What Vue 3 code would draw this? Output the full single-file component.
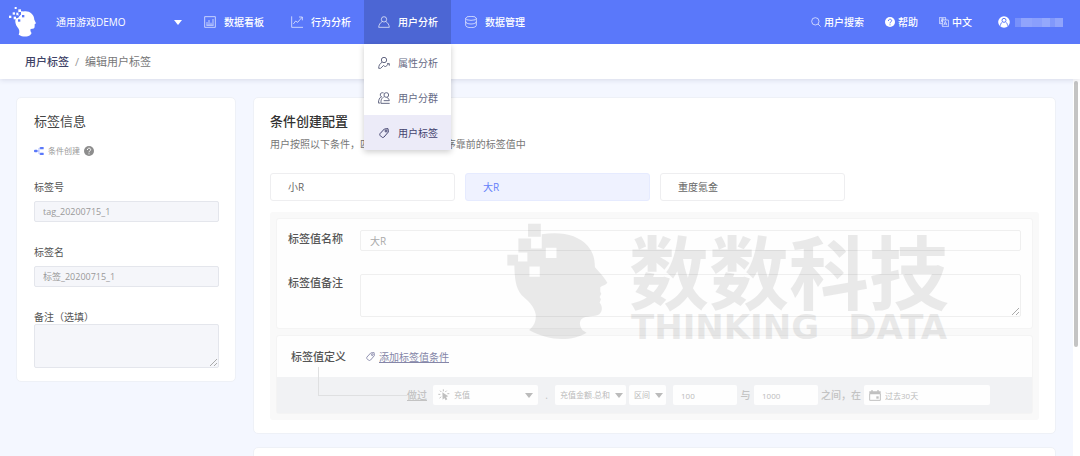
<script setup>
import { ref } from 'vue'

const navItems = [
  { key: 'board', label: '数据看板' },
  { key: 'behavior', label: '行为分析' },
  { key: 'user', label: '用户分析', active: true },
  { key: 'data', label: '数据管理' },
]
const menuItems = [
  { key: 'attr', label: '属性分析' },
  { key: 'group', label: '用户分群' },
  { key: 'tag', label: '用户标签', active: true },
]
const tabs = ['小R', '大R', '重度氪金']
const activeTab = ref(1)
const tagId = ref('tag_20200715_1')
const tagName = ref('标签_20200715_1')
const tagRemark = ref('')
const valueName = ref('大R')
const valueRemark = ref('')
const rangeMin = ref('100')
const rangeMax = ref('1000')
const period = ref('过去30天')
</script>

<template>
  <div class="page">
    <header class="topbar">
      <div class="brand">
        <svg class="logo" viewBox="24 16 88 96" aria-hidden="true">
          <path fill="#fff" d="M69 33C84 29 101 39 102 57L107 68L103 71V77C103 84 99 85 91 85C89 89 91 94 94 97L90 103C80 110 66 109 55 102C59 92 57 87 51 79C46 72 43 63 46 55L55 49Z" />
          <g fill="#fff"><rect x="43" y="19" width="6" height="6" /><rect x="54" y="26" width="8" height="8" /><rect x="37" y="35" width="7" height="7" /><rect x="26" y="45" width="7" height="7" /><rect x="48" y="36" width="8" height="8" /><rect x="40" y="48" width="8" height="8" /><rect x="62" y="32" width="8" height="10" /></g>
          <g fill="#5a78fa"><rect x="54" y="36" width="7" height="6" /><rect x="65" y="43" width="7" height="7" /><rect x="47" y="45" width="7" height="7" /><rect x="53" y="56" width="7" height="7" /></g>
        </svg>
        <button class="project" type="button"><span>通用游戏DEMO</span><i class="caret"></i></button>
      </div>
      <nav class="nav">
        <div v-for="item in navItems" :key="item.key" class="nav-cell">
          <a href="#" class="nav-item" :class="{ active: item.active }">
            <svg class="icon12" viewBox="0 0 36 36" aria-hidden="true">
              <g v-if="item.key === 'board'"><path d="M2 2H34V34H2ZM9 27V18M15 27V12M21 27V20M27 27V9M7 28H29" /></g>
              <g v-else-if="item.key === 'behavior'"><path d="M2 1V34H36M7 24L14 15L20 19L33 4M24 3H34V13" /></g>
              <g v-else-if="item.key === 'user'"><circle cx="18" cy="10" r="8" /><path d="M12 17C6 21 3 26 2 34H34C33 26 30 21 24 17" /></g>
              <g v-else><ellipse cx="18" cy="7" rx="16" ry="6" /><path d="M2 7V28C2 32 9 35 18 35S34 32 34 28V7M2 17C2 21 9 24 18 24S34 21 34 17" /></g>
            </svg>
            <span>{{ item.label }}</span>
          </a>
          <div v-if="item.active" class="menu">
            <a v-for="m in menuItems" :key="m.key" href="#" class="menu-item" :class="{ current: m.active }">
              <svg class="icon12" viewBox="0 0 36 36" aria-hidden="true">
                <g v-if="m.key === 'attr'"><circle cx="18" cy="9" r="8" /><path d="M12 16C5 20 2 26 2 34H8L17 25L22 30L32 20M27 20H34V26" /></g>
                <g v-else-if="m.key === 'group'"><path d="M17 15C8 20 9 28 9 34H35M26 16C31 18 33 22 34 26H17M10 14C4 17 2 24 1 33H7" /><circle cx="25" cy="9" r="7" /><path d="M17 3C11 0 6 4 7 9C7 12 9 14 12 15" /></g>
                <g v-else><path d="M6 20L19 6L30 5L31 15L18 30C16 32 13 32 11 30L6 25C5 23 5 21 6 20Z" /><circle cx="24" cy="12" r="3" /></g>
              </svg>
              <span>{{ m.label }}</span>
            </a>
          </div>
        </div>
      </nav>
      <div class="tools">
        <a href="#" class="tool">
          <svg class="icon10" viewBox="0 0 30 30" aria-hidden="true"><circle cx="13" cy="13" r="11" /><path d="M21 21L29 29" /></svg>用户搜索
        </a>
        <a href="#" class="tool">
          <svg class="icon10" viewBox="0 0 30 30" aria-hidden="true"><circle cx="15" cy="15" r="15" fill="#fff" stroke="none" /><path class="on-light" d="M10 12C10 5 20 5 20 11C20 15 15 14 15 19M15 22V25" /></svg>帮助
        </a>
        <a href="#" class="tool">
          <svg class="icon10" viewBox="0 0 30 30" aria-hidden="true"><path d="M10 20H3Q1 20 1 18V3Q1 1 3 1H18Q20 1 20 3V9M5 6H16M10 4V6C10 11 7 14 4 16M6 9C8 13 11 14 13 15" /><rect x="10" y="9" width="19" height="20" rx="2" /><path d="M14 25L19 13L24 25M16 21H22" /></svg>中文
        </a>
        <a href="#" class="account" aria-label="account">
          <svg class="icon12" viewBox="0 0 36 36" aria-hidden="true"><circle cx="18" cy="18" r="17.5" fill="#fff" stroke="none" /><circle class="on-light" cx="18" cy="13" r="6" /><path class="on-light" d="M13 18C9 21 8 24 7 29M23 18C27 21 28 24 29 29" /></svg>
          <span class="mask"></span>
        </a>
      </div>
    </header>

    <div class="crumbs">
      <a href="#">用户标签</a><span class="slash">/</span><span>编辑用户标签</span>
    </div>

    <div class="viewport">
      <main class="content">
        <section class="card info">
          <h2>标签信息</h2>
          <div class="create-type">
            <svg class="flow" viewBox="0 0 30 24" aria-hidden="true"><rect x="0" y="8" width="11" height="8" rx="3" fill="#5a78fa" /><rect x="18" y="0" width="11" height="7" rx="1" fill="#5a78fa" /><rect x="18" y="17" width="11" height="7" rx="1" fill="#5a78fa" /><path d="M11 12H15M20 3H15V21H20" stroke="#8ea2fb" stroke-width="2" fill="none" /></svg>
            <span>条件创建</span>
            <svg class="hint" viewBox="0 0 30 30" aria-hidden="true"><circle cx="15" cy="15" r="15" fill="#8d8d8d" /><path d="M10 12C10 5 20 5 20 11C20 15 15 14 15 19M15 22V25" fill="none" stroke="#fff" stroke-width="3" /></svg>
          </div>
          <label for="tag-id">标签号</label>
          <input id="tag-id" v-model="tagId" class="field" type="text" readonly />
          <label for="tag-name">标签名</label>
          <input id="tag-name" v-model="tagName" class="field" type="text" readonly />
          <label for="tag-remark">备注（选填）</label>
          <textarea id="tag-remark" v-model="tagRemark" class="field area"></textarea>
        </section>

        <div class="right">
          <section class="card config">
            <h2 class="strong">条件创建配置</h2>
            <p class="desc">用户按照以下条件，匹配超过1个时入顺序靠前的标签值中</p>
            <div class="tabs">
              <button v-for="(t, i) in tabs" :key="t" type="button" class="tab" :class="{ selected: i === activeTab }" @click="activeTab = i">{{ t }}</button>
            </div>

            <div class="frame">
              <div class="panel form">
                <label for="value-name">标签值名称</label>
                <input id="value-name" v-model="valueName" class="plain" type="text" />
                <label for="value-remark">标签值备注</label>
                <textarea id="value-remark" v-model="valueRemark" class="plain area"></textarea>
              </div>

              <div class="panel define">
                <div class="define-head">
                  <span class="define-title">标签值定义</span>
                  <a href="#" class="add">
                    <svg viewBox="3 3 30 30" aria-hidden="true"><path d="M6 20L19 6L30 5L31 15L18 30C16 32 13 32 11 30L6 25C5 23 5 21 6 20Z" /><circle cx="24" cy="12" r="3" /></svg><span>添加标签值条件</span>
                  </a>
                </div>
                <div class="rule">
                  <a href="#" class="did">做过</a>
                  <div class="pick event">
                    <svg class="click" viewBox="0 0 36 36" aria-hidden="true"><path d="M13 10L31 22L24 24L28 31L23 34L19 27L14 32Z" fill="#c0c0c0" /><path d="M16 1V7M6 5L10 9M26 5L22 9M1 16H7M5 28L9 23M28 14H34" stroke="#c0c0c0" stroke-width="3" /></svg>
                    <select aria-label="事件"><option>充值</option></select><i class="caret"></i>
                  </div>
                  <span class="dot">.</span>
                  <div class="pick metric"><select aria-label="指标"><option>充值金额.总和</option></select><i class="caret"></i></div>
                  <div class="pick operator"><select aria-label="运算"><option>区间</option></select><i class="caret"></i></div>
                  <input v-model="rangeMin" class="num first" type="text" aria-label="最小值" />
                  <span class="and">与</span>
                  <input v-model="rangeMax" class="num" type="text" aria-label="最大值" />
                  <span class="between">之间，在</span>
                  <div class="pick date">
                    <svg class="calendar" viewBox="0 0 36 33" aria-hidden="true"><path d="M1 4H35V13H1ZM7 0H11V6H7ZM25 0H29V6H25Z" fill="#c0c0c0" /><path d="M2 12V31H34V12" fill="none" stroke="#c0c0c0" stroke-width="3" /><rect x="22" y="19" width="7" height="7" fill="#c0c0c0" /></svg>
                    <input v-model="period" type="text" aria-label="时间范围" />
                  </div>
                </div>
              </div>

              <div class="watermark">
                <svg class="head" viewBox="50 56 302 350" aria-hidden="true">
                  <path fill="currentColor" fill-rule="evenodd" d="M113 58H151V97H113ZM84 102H122V142H111V144H84ZM51 151H83V183H51ZM154 90C210 80 262 91 291 124C309 146 312 163 313 188C327 204 342 219 350 235C346 242 335 243 329 248V262L332 268L327 277L331 284L327 294C337 307 335 321 326 329C311 338 287 332 273 343C265 353 267 365 276 377L288 384C245 409 180 412 116 376C132 362 137 350 136 330C132 303 109 286 94 272C75 249 73 219 72 183H83V171H111V142H122V132H154ZM166 130V161H198V130ZM117 186V217H148V186Z" />
                </svg>
                <div class="wordmark">
                  <div class="cn">数数科技</div>
                  <div class="en"><span>THINKING</span><span>DATA</span></div>
                </div>
              </div>
            </div>
          </section>
          <section class="card next"></section>
        </div>
      </main>
      <div class="scrollbar"><div class="thumb"></div></div>
    </div>
  </div>
</template>

<style>
body {
  margin: 0;
}
</style>

<style scoped>
.page,
.page * {
  box-sizing: border-box;
}
.page {
  height: 100vh;
  display: flex;
  flex-direction: column;
  overflow: hidden;
  background: #f4f7ff;
  color: #555;
  font: 10px/14px "Open Sans", "Noto Sans CJK SC", sans-serif;
}
input,
textarea,
select,
button {
  font: inherit;
  color: inherit;
  margin: 0;
  outline: none;
}
a {
  color: inherit;
  text-decoration: none;
}
h2,
p {
  margin: 0;
}
svg {
  flex: none;
  display: block;
}
.topbar {
  position: relative;
  z-index: 3;
  flex: none;
  height: 44px;
  display: flex;
  align-items: stretch;
  background: #5a78fa;
  color: #fff;
}
.brand {
  width: 190px;
  display: flex;
  align-items: center;
  padding: 0 8px;
  gap: 18px;
}
.logo {
  width: 30px;
  height: 32px;
}
.project {
  flex: 1;
  display: flex;
  align-items: center;
  justify-content: space-between;
  padding: 0;
  border: 0;
  background: none;
}
.caret {
  flex: none;
  border: 4px solid transparent;
  border-top: 5px solid currentColor;
  border-bottom: 0;
}
.nav {
  display: flex;
  font-weight: 500;
}
.nav-cell {
  position: relative;
  display: flex;
}
.nav-item,
.menu-item {
  display: flex;
  align-items: center;
  gap: 8px;
  padding: 0 13px 0 14px;
}
.nav-item.active {
  background: #4c66d4;
}
.icon12 {
  width: 12px;
  height: 12px;
  fill: none;
  stroke: currentColor;
  stroke-width: 2;
}
.icon10 {
  width: 10px;
  height: 10px;
  fill: none;
  stroke: currentColor;
  stroke-width: 2;
}
.on-light {
  stroke: #5a78fa;
  stroke-width: 3;
  fill: none;
}
.menu {
  position: absolute;
  top: 100%;
  left: 0;
  right: 0;
  padding: 1px 0 0;
  background: #fff;
  color: #666a85;
  box-shadow: 0 2px 6px rgba(0, 0, 0, 0.2);
  font-weight: 400;
}
.menu-item {
  height: 35px;
}
.menu-item .icon12 {
  stroke-width: 3;
}
.menu-item.current {
  background: #ecebf8;
  color: #43436f;
}
.tools {
  margin-left: auto;
  display: flex;
  align-items: center;
  gap: 21px;
  padding-right: 17px;
  font-weight: 500;
}
.tool {
  display: flex;
  align-items: center;
  gap: 3px;
}
.account {
  display: flex;
  align-items: center;
  gap: 5px;
  margin-left: 5px;
}
.mask {
  width: 48px;
  height: 9px;
  background: linear-gradient(90deg, #7891fb 0 12%, #90a4fc 12% 36%, #8a9ffc 36% 56%, #94a8fc 56% 72%, #8198fb 72% 84%, #90a4fc 84%);
}
.crumbs {
  position: relative;
  z-index: 2;
  flex: none;
  height: 35px;
  display: flex;
  align-items: center;
  padding: 0 25px;
  background: #fff;
  box-shadow: 0 1px 5px rgba(60, 70, 110, 0.16);
  font-size: 11px;
  color: #777;
}
.crumbs a {
  color: #3e4266;
  font-weight: 500;
}
.slash {
  padding: 0 6px;
  color: #999;
}
.viewport {
  flex: 1;
  min-height: 0;
  display: flex;
}
.content {
  flex: 1;
  min-width: 0;
  display: grid;
  grid-template-columns: 220px 1fr;
  align-items: start;
  gap: 17px;
  padding: 18px 17px 0 16px;
}
.scrollbar {
  width: 7px;
  padding: 2px 2px 0 1px;
  background: #fff;
}
.thumb {
  height: 71%;
  border-radius: 2px;
  background: #c4c4c4;
}
.card {
  background: #fff;
  border: 1px solid #eef1f7;
  border-radius: 5px;
  padding: 14px 16px 13px;
}
.card h2 {
  font-size: 13px;
  line-height: 18px;
  font-weight: 400;
  color: #444;
}
.card h2.strong {
  font-weight: 500;
  color: #333;
}
.info {
  display: flex;
  flex-direction: column;
  padding-left: 17px;
}
.create-type {
  display: flex;
  align-items: center;
  gap: 4px;
  height: 12px;
  margin-top: 15px;
  font-size: 8px;
  line-height: 12px;
  color: #999;
}
.flow {
  width: 10px;
  height: 8px;
}
.hint {
  width: 10px;
  height: 10px;
}
.info label {
  margin-top: 23px;
}
.field {
  width: 100%;
  height: 21px;
  margin-top: 7px;
  padding: 0 8px;
  border: 1px solid #e4e6ec;
  border-radius: 2px;
  background: #f5f6fa;
  color: #999;
  font-size: 9px;
}
.field.area {
  height: 44px;
  margin-top: 0;
}
.area {
  display: block;
  resize: vertical;
}
.area::-webkit-resizer {
  background: linear-gradient(135deg, transparent 0 46%, #aaa 46% 56%, transparent 56% 72%, #aaa 72% 82%, transparent 82%) right 1px bottom 1px / 7px 7px no-repeat;
}
.right {
  min-width: 0;
  display: flex;
  flex-direction: column;
  gap: 13px;
}
.desc {
  margin-top: 7px;
  color: #777;
}
.tabs {
  display: flex;
  gap: 10px;
  margin-top: 22px;
}
.tab {
  width: 185px;
  height: 28px;
  padding: 0 17px;
  text-align: left;
  background: #fff;
  border: 1px solid #eeeef0;
  border-radius: 3px;
  color: #666;
}
.tab.selected {
  background: #eff2ff;
  border-color: #e6ebff;
  color: #6480fa;
}
.frame {
  position: relative;
  display: flex;
  flex-direction: column;
  gap: 6px;
  margin-top: 11px;
  padding: 6px;
  background: #f9f9f9;
  border-radius: 3px;
}
.panel {
  background: #fefefe;
  border: 1px solid #f4f4f4;
  border-radius: 3px;
}
.form {
  display: grid;
  grid-template-columns: 60px 1fr;
  gap: 23px 12px;
  padding: 11px;
}
.form label,
.define-title {
  font-size: 11px;
  line-height: 18px;
  font-weight: 500;
  color: #555;
}
.plain {
  width: 100%;
  height: 21px;
  padding: 0 9px;
  border: 1px solid #efefef;
  border-radius: 2px;
  background: #fefefe;
  color: #aaa;
}
.plain.area {
  height: 43px;
}
.define {
  position: relative;
}
.define::after {
  content: "";
  position: absolute;
  left: 41px;
  top: 31px;
  width: 88px;
  height: 28px;
  border: solid #dfe0e1;
  border-width: 0 0 1px 1px;
}
.define-head {
  height: 41px;
  display: flex;
  align-items: center;
  gap: 20px;
  padding-left: 14px;
}
.add {
  display: flex;
  align-items: center;
  gap: 4px;
  color: #8586a8;
}
.add span {
  text-decoration: underline;
}
.add svg {
  width: 9px;
  height: 9px;
  fill: none;
  stroke: currentColor;
  stroke-width: 3;
}
.rule {
  height: 36px;
  display: flex;
  align-items: center;
  gap: 3px;
  padding-left: 130px;
  background: #f1f2f4;
  color: #c3c3c3;
  font-weight: 500;
}
.did {
  width: 23px;
  text-decoration: underline;
}
.pick,
.num {
  height: 20px;
  border: 0;
  border-radius: 2px;
  background: #fefefe;
  font-size: 8px;
  font-weight: 400;
  color: #bbb;
}
.pick {
  display: flex;
  align-items: center;
  padding: 0 3px 0 5px;
}
.pick select,
.pick input {
  flex: 1;
  width: 0;
  min-width: 0;
  height: 20px;
  padding: 0;
  border: 0;
  background: none;
  appearance: none;
}
.event {
  width: 105px;
  gap: 4px;
  padding: 0 5px;
}
.click {
  width: 12px;
  height: 12px;
}
.dot,
.and {
  width: 11px;
  text-align: center;
}
.metric {
  width: 71px;
}
.operator {
  width: 37px;
}
.num {
  width: 64px;
  padding: 0 8px;
}
.num.first {
  margin-left: 4px;
}
.date {
  width: 126px;
  gap: 4px;
}
.calendar {
  width: 12px;
  height: 11px;
}
.next {
  height: 120px;
}
.watermark {
  position: absolute;
  top: 11px;
  right: 90px;
  display: flex;
  gap: 21px;
  color: #000;
  opacity: 0.08;
  pointer-events: none;
}
.head {
  width: 101px;
  height: 117px;
}
.wordmark {
  padding-top: 5px;
}
.cn {
  font: 700 80px/80px "Noto Sans CJK SC", sans-serif;
}
.en {
  display: flex;
  justify-content: space-between;
  padding: 2px 2px 0;
  font: 700 34px/34px "DejaVu Sans", sans-serif;
}
</style>
